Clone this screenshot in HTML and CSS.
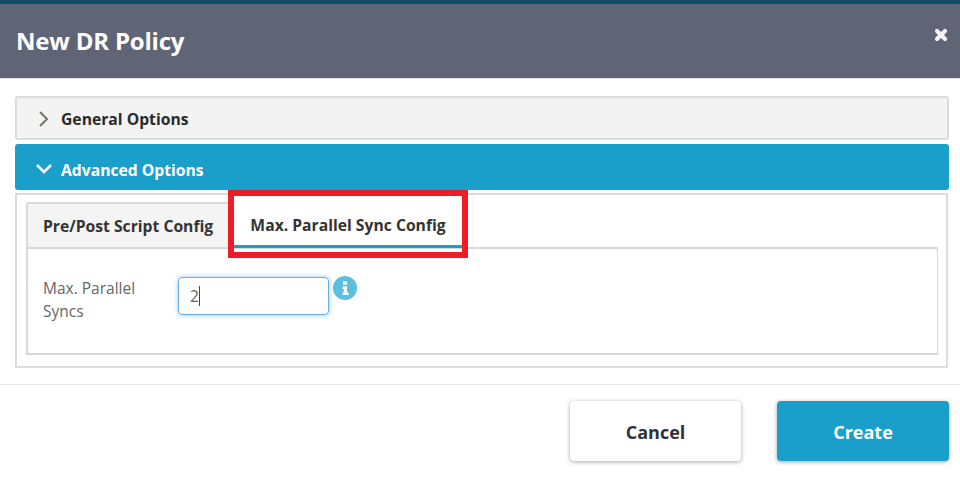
FILE: index.html
```html
<!DOCTYPE html>
<html lang="en">
<head>
<meta charset="utf-8">
<title>New DR Policy</title>
<link rel="stylesheet" href="styles.css">
</head>
<body>
<div class="modal">
  <header class="modal-header">
    <h1 class="modal-title">New DR Policy</h1>
    <svg class="close-icon" width="14" height="14" viewBox="0 0 14 14"><path d="M3 3l8 8M11 3l-8 8" stroke="#f4f4f6" stroke-width="4.200" stroke-linecap="round"/></svg>
  </header>
  <main class="modal-body">
    <div class="accordion accordion-closed">
      <svg class="chevron" width="12" height="18" viewBox="0 0 12 18"><path d="M2 2l7 7-7 7" fill="none" stroke="#77736f" stroke-width="2"/></svg>
      <span>General Options</span>
    </div>
    <div class="accordion accordion-open">
      <svg class="chevron-down" width="18" height="12" viewBox="0 0 18 12"><path d="M2 2l7 7 7-7" fill="none" stroke="#fff" stroke-width="2.600"/></svg>
      <span class="accordion-open-label">Advanced Options</span>
    </div>
    <section class="panel">
      <div class="tab-bar">
        <div class="tab tab-inactive">Pre/Post Script Config</div>
        <div class="tab tab-active">Max. Parallel Sync Config</div>
      </div>
      <div class="tab-content">
        <label class="field-label">Max. Parallel Syncs</label>
        <div class="input"><span>2</span><i class="caret"></i></div>
        <svg class="info" width="24" height="24" viewBox="0 0 24 24"><circle cx="12" cy="12" r="12" fill="#5bc0de"/><path d="M10 5.500h4v3.200h-4zM9.500 10.500h4.500v6h1.500v2.500h-6v-2.500h1.300v-3.500h-1.300z" fill="#fff"/></svg>
      </div>
    </section>
    <div class="highlight"></div>
  </main>
  <footer class="modal-footer">
    <button class="btn btn-cancel">Cancel</button>
    <button class="btn btn-create">Create</button>
  </footer>
</div>
</body>
</html>
```
FILE: styles.css
```css
* { box-sizing: border-box; }
html, body { margin: 0; height: 100%; }
body {
  width: 960px;
  height: 478px;
  overflow: hidden;
  background: #fff;
  font-family: "Open Sans", "Liberation Sans", sans-serif;
  border-top: 4px solid #124f66;
}
.modal { display: flex; flex-direction: column; height: 474px; }
.modal-header {
  height: 75px;
  flex: none;
  background: #5f6477;
  display: flex;
  align-items: center;
  justify-content: space-between;
  padding: 0 12px 0 16px;
  border-bottom: 1px solid #dfe0e4;
}
.modal-title { margin: 0 0 2px; font-size: 24px; font-weight: 700; color: #fff; letter-spacing: -0.2px; }
.close-icon { margin-top: -12px; }
.modal-body {
  position: relative;
  padding: 17px 11px 0 15px;
  height: 306px;
  border-bottom: 1px solid #e6e6ea;
  flex: none;
}
.accordion {
  display: flex;
  align-items: center;
  font-size: 15.700px;
  font-weight: 700;
  border-radius: 3px;
}
.accordion-closed {
  height: 44px;
  background: #f3f3f3;
  border: 2px solid #dcdcdc;
  color: #2b2b2b;
  padding: 2px 0 0 21px;
  gap: 11px;
}
.accordion-open {
  height: 46px;
  margin-top: 4px;
  background: #1a9fcb;
  color: #fff;
  padding: 4px 0 0 20px;
  gap: 8px;
}
.accordion-open-label { margin-top: 1px; }
.panel {
  margin-top: 3px;
  width: 933px;
  height: 175px;
  border: 2px solid #dcdcdc;
  padding: 7px 8px 0 9px;
  background: #fff;
}
.tab-bar {
  display: flex;
  height: 47px;
  font-size: 15.700px;
  font-weight: 700;
  color: #333;
  border-bottom: 2px solid #d8d8d8;
}
.tab { display: flex; align-items: center; }
.tab-inactive {
  width: 206px;
  background: #f4f4f4;
  padding-left: 15px;
  border: 2px solid #d8d8d8;
  border-width: 2px 0 0 2px;
  border-top-left-radius: 3px;
}
.tab-active {
  width: 228px;
  margin-left: 2px;
  margin-bottom: -1px;
  padding-top: 3px;
  justify-content: center;
  background: #fff;
  border-bottom: 3px solid #1a9fcb;
}
.tab-content {
  display: flex;
  align-items: flex-start;
  height: 106px;
  padding: 28px 0 0 15px;
  border: 2px solid #d8d8d8;
  border-top: 0;
  border-width: 0 1px 2px 2px;
}
.field-label { width: 135px; font-size: 15.500px; line-height: 23px; color: #666; padding-right: 30px; }
.input {
  width: 151px;
  height: 38px;
  border: 1px solid #66afe9;
  border-radius: 4px;
  box-shadow: 0 0 5px rgba(102, 175, 233, 0.7);
  font-size: 15.500px;
  color: #666;
  display: flex;
  align-items: center;
  padding-left: 11px;
}
.caret { display: block; width: 1px; height: 20px; background: #444; }
.info { margin: -1px 0 0 4px; }
.highlight {
  position: absolute;
  left: 228px;
  top: 111px;
  width: 240px;
  height: 68px;
  border: 6px solid #ee1c25;
  pointer-events: none;
}
.modal-footer {
  flex: 1;
  display: flex;
  justify-content: flex-end;
  align-items: flex-start;
  gap: 36px;
  padding: 16px 11px 0 0;
}
.btn {
  height: 60px;
  border: 0;
  padding-top: 2px;
  border-radius: 4px;
  font-family: inherit;
  font-size: 18px;
  font-weight: 700;
  box-shadow: 0 1px 4px rgba(0, 0, 0, 0.35);
}
.btn-cancel { width: 171px; background: #fff; color: #2f3237; }
.btn-create { width: 172px; background: #1a9fcb; color: #fff; }
```
